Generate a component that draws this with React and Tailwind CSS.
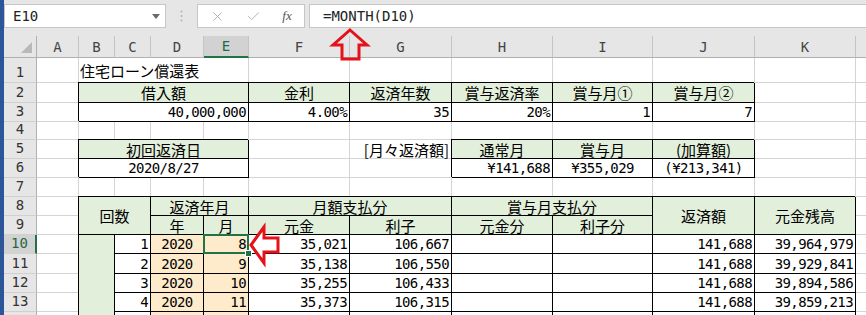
import React from "react";
import { X, Check } from "lucide-react";

const JP = "font-['Noto_Sans_CJK_JP',sans-serif] text-[15px] leading-none";
const NUM = "font-['DejaVu_Sans_Mono','Noto_Sans_CJK_JP',monospace] text-[14px] tracking-[-0.6px] leading-none";
const HEAD = "font-['DejaVu_Sans_Mono',monospace] text-[14px] leading-none";

function Cell({ span = "", b, g, o, al = "r", jp, sel, children }) {
  const bg = g ? "bg-[#e2efda]" : o ? "bg-[#fdebcb]" : "bg-white";
  const bd = b
    ? `relative border-black shadow-[-1px_-1px_0_0_#000] ${sel ? "z-20" : "z-10"}`
    : "border-[#d4d4d4]";
  const align = al === "c" ? "justify-center" : al === "l" ? "justify-start pl-[1px]" : "justify-end pr-[2px]";
  return (
    <div className={`flex items-center whitespace-nowrap border-r border-b text-black ${bg} ${bd} ${align} ${jp ? JP : NUM} ${span}`}>
      {children}
      {sel && (
        <>
          <div className="pointer-events-none absolute -left-px -top-px -right-px -bottom-px border-2 border-[#217346]" />
          <div className="absolute -right-[4px] -bottom-[4px] h-[7px] w-[7px] border border-white bg-[#217346]" />
        </>
      )}
    </div>
  );
}

function RowHead({ n, sel }) {
  return (
    <div
      className={`flex items-end justify-center pb-[3px] border-b border-b-[#d0d0d0] ${HEAD} ${
        sel ? "bg-[#d2d2d2] text-[#1e6b41] border-r-2 border-r-[#217346]" : "bg-[#e6e6e6] text-[#333] border-r border-r-[#b0b0b0]"
      }`}
    >
      {n}
    </div>
  );
}

function ColHead({ l, sel }) {
  return (
    <div
      className={`flex items-center justify-center border-r border-r-[#c4c4c4] ${HEAD} ${
        sel ? "bg-[#d2d2d2] text-[#1e6b41] border-b-2 border-b-[#217346]" : "bg-[#e6e6e6] text-[#444] border-b border-b-[#b0b0b0]"
      }`}
    >
      {l}
    </div>
  );
}

// plain empty cells
function Blank({ n }) {
  return Array.from({ length: n }, (_, i) => <Cell key={i} />);
}

// row 14 only peeks in at the bottom edge, so it stays empty
const rows = [
  { n: "10", c: "1", y: "2020", m: "8", p: "35,021", i: "106,667", j: "141,688", k: "39,964,979" },
  { n: "11", c: "2", y: "2020", m: "9", p: "35,138", i: "106,550", j: "141,688", k: "39,929,841" },
  { n: "12", c: "3", y: "2020", m: "10", p: "35,255", i: "106,433", j: "141,688", k: "39,894,586" },
  { n: "13", c: "4", y: "2020", m: "11", p: "35,373", i: "106,315", j: "141,688", k: "39,859,213" },
  { n: "", c: "", y: "", m: "", p: "", i: "", j: "", k: "" },
];

export default function App() {
  return (
    <div className="relative flex h-[315px] w-[866px] overflow-hidden bg-white">
      {/* window edge */}
      <div className="w-[4px] shrink-0 bg-[#2b579a]" />

      <div className="flex min-w-0 flex-1 flex-col">
        {/* formula bar */}
        <div className="flex h-[36px] shrink-0 items-start bg-[#e6e6e6] pt-[4px]">
          <div className="flex h-[24px] w-[162px] shrink-0 items-center justify-between border border-[#c6c6c6] bg-white pl-[8px] pr-[5px]">
            <span className="font-['DejaVu_Sans_Mono',monospace] text-[14px] text-[#222]">E10</span>
            <svg width="8" height="5" viewBox="0 0 8 5">
              <path d="M0 0 L8 0 L4 5 Z" fill="#6a6a6a" />
            </svg>
          </div>
          <div className="flex h-[24px] w-[31px] shrink-0 items-center justify-center">
            <svg width="3" height="12" viewBox="0 0 3 12">
              <circle cx="1.5" cy="1.5" r="1" fill="#b4b4b4" />
              <circle cx="1.5" cy="6" r="1" fill="#b4b4b4" />
              <circle cx="1.5" cy="10.5" r="1" fill="#b4b4b4" />
            </svg>
          </div>
          <div className="flex h-[24px] w-[108px] shrink-0 items-center border border-[#c6c6c6] bg-white">
            <div className="flex w-[38px] justify-center">
              <X size={15} strokeWidth={1.4} color="#a8a8a8" />
            </div>
            <div className="flex w-[34px] justify-center">
              <Check size={15} strokeWidth={1.4} color="#a8a8a8" />
            </div>
            <div className="flex w-[34px] justify-center font-['Liberation_Serif',serif] text-[13px] italic text-[#555]">
              fx
            </div>
          </div>
          <div className="ml-[4px] flex h-[24px] flex-1 items-center border-y border-l border-[#c6c6c6] bg-white pl-[13px]">
            <span className="font-['DejaVu_Sans_Mono',monospace] text-[14px] text-[#222]">=MONTH(D10)</span>
          </div>
        </div>

        {/* sheet */}
        <div className="grid grid-cols-[33px_42px_36px_36px_53px_45px_101px_102px_101px_100px_102px_101px_60px] grid-rows-[22px_25px_20px_19px_18px_19px_19px_19px_19px_19px_19px_20px_19px_19px_19px_19px]">
          {/* column headers */}
          <div className="flex items-end justify-end border-r border-b border-r-[#b0b0b0] border-b-[#b0b0b0] bg-[#e6e6e6] pb-[4px] pr-[4px]">
            <svg width="11" height="11" viewBox="0 0 11 11">
              <path d="M11 0 L11 11 L0 11 Z" fill="#b8b8b8" />
            </svg>
          </div>
          <ColHead l="A" />
          <ColHead l="B" />
          <ColHead l="C" />
          <ColHead l="D" />
          <ColHead l="E" sel />
          <ColHead l="F" />
          <ColHead l="G" />
          <ColHead l="H" />
          <ColHead l="I" />
          <ColHead l="J" />
          <ColHead l="K" />
          <ColHead l="" />

          {/* row 1 */}
          <RowHead n="1" />
          <Cell />
          <Cell span="col-span-4" al="l" jp>
            住宅ローン償還表
          </Cell>
          <Blank n={7} />

          {/* row 2 */}
          <RowHead n="2" />
          <Cell />
          <Cell span="col-span-4" b g al="c" jp>借入額</Cell>
          <Cell b g al="c" jp>金利</Cell>
          <Cell b g al="c" jp>返済年数</Cell>
          <Cell b g al="c" jp>賞与返済率</Cell>
          <Cell b g al="c" jp>賞与月①</Cell>
          <Cell b g al="c" jp>賞与月②</Cell>
          <Blank n={2} />

          {/* row 3 */}
          <RowHead n="3" />
          <Cell />
          <Cell span="col-span-4" b>40,000,000</Cell>
          <Cell b>4.00%</Cell>
          <Cell b>35</Cell>
          <Cell b>20%</Cell>
          <Cell b>1</Cell>
          <Cell b>7</Cell>
          <Blank n={2} />

          {/* row 4 */}
          <RowHead n="4" />
          <Blank n={12} />

          {/* row 5 */}
          <RowHead n="5" />
          <Cell />
          <Cell span="col-span-4" b g al="c" jp>初回返済日</Cell>
          <Cell />
          <Cell jp>[月々返済額]</Cell>
          <Cell b g al="c" jp>通常月</Cell>
          <Cell b g al="c" jp>賞与月</Cell>
          <Cell b g al="c" jp>(加算額)</Cell>
          <Blank n={2} />

          {/* row 6 */}
          <RowHead n="6" />
          <Cell />
          <Cell span="col-span-4" b al="c">2020/8/27</Cell>
          <Blank n={2} />
          <Cell b>¥141,688</Cell>
          <Cell b al="c">¥355,029</Cell>
          <Cell b al="c">(¥213,341)</Cell>
          <Blank n={2} />

          {/* row 7 */}
          <RowHead n="7" />
          <Blank n={12} />

          {/* row 8 */}
          <RowHead n="8" />
          <Cell />
          <Cell span="col-span-2 row-span-2" b g al="c" jp>回数</Cell>
          <Cell span="col-span-2" b g al="c" jp>返済年月</Cell>
          <Cell span="col-span-2" b g al="c" jp>月額支払分</Cell>
          <Cell span="col-span-2" b g al="c" jp>賞与月支払分</Cell>
          <Cell span="row-span-2" b g al="c" jp>返済額</Cell>
          <Cell span="row-span-2" b g al="c" jp>元金残高</Cell>
          <Cell />

          {/* row 9 */}
          <RowHead n="9" />
          <Cell />
          <Cell b g al="c" jp>年</Cell>
          <Cell b g al="c" jp>月</Cell>
          <Cell b g al="c" jp>元金</Cell>
          <Cell b g al="c" jp>利子</Cell>
          <Cell b g al="c" jp>元金分</Cell>
          <Cell b g al="c" jp>利子分</Cell>
          <Cell />

          {/* rows 10-14 */}
          {rows.map((r, idx) => (
            <React.Fragment key={idx}>
              <RowHead n={r.n} sel={idx === 0} />
              <Cell />
              {idx === 0 && <Cell span="row-span-5" b g />}
              <Cell b>{r.c}</Cell>
              <Cell b o al="c">{r.y}</Cell>
              <Cell b o sel={idx === 0}>{r.m}</Cell>
              <Cell b>{r.p}</Cell>
              <Cell b>{r.i}</Cell>
              <Cell b />
              <Cell b />
              <Cell b>{r.j}</Cell>
              <Cell b>{r.k}</Cell>
              <Cell />
            </React.Fragment>
          ))}
        </div>
      </div>

      {/* callout arrows */}
      <svg className="pointer-events-none absolute left-0 top-0 z-30" width="866" height="315" viewBox="0 0 866 315">
        <polygon
          points="350,30 367,45 359,45 359,59 342,59 342,45 333,45"
          fill="none"
          stroke="#e5121b"
          strokeWidth="3"
        />
        <polygon
          points="251,245 264,227 264,238 278,238 278,252 264,252 264,263"
          fill="#ffffff"
          stroke="#e5121b"
          strokeWidth="3"
        />
      </svg>
    </div>
  );
}
